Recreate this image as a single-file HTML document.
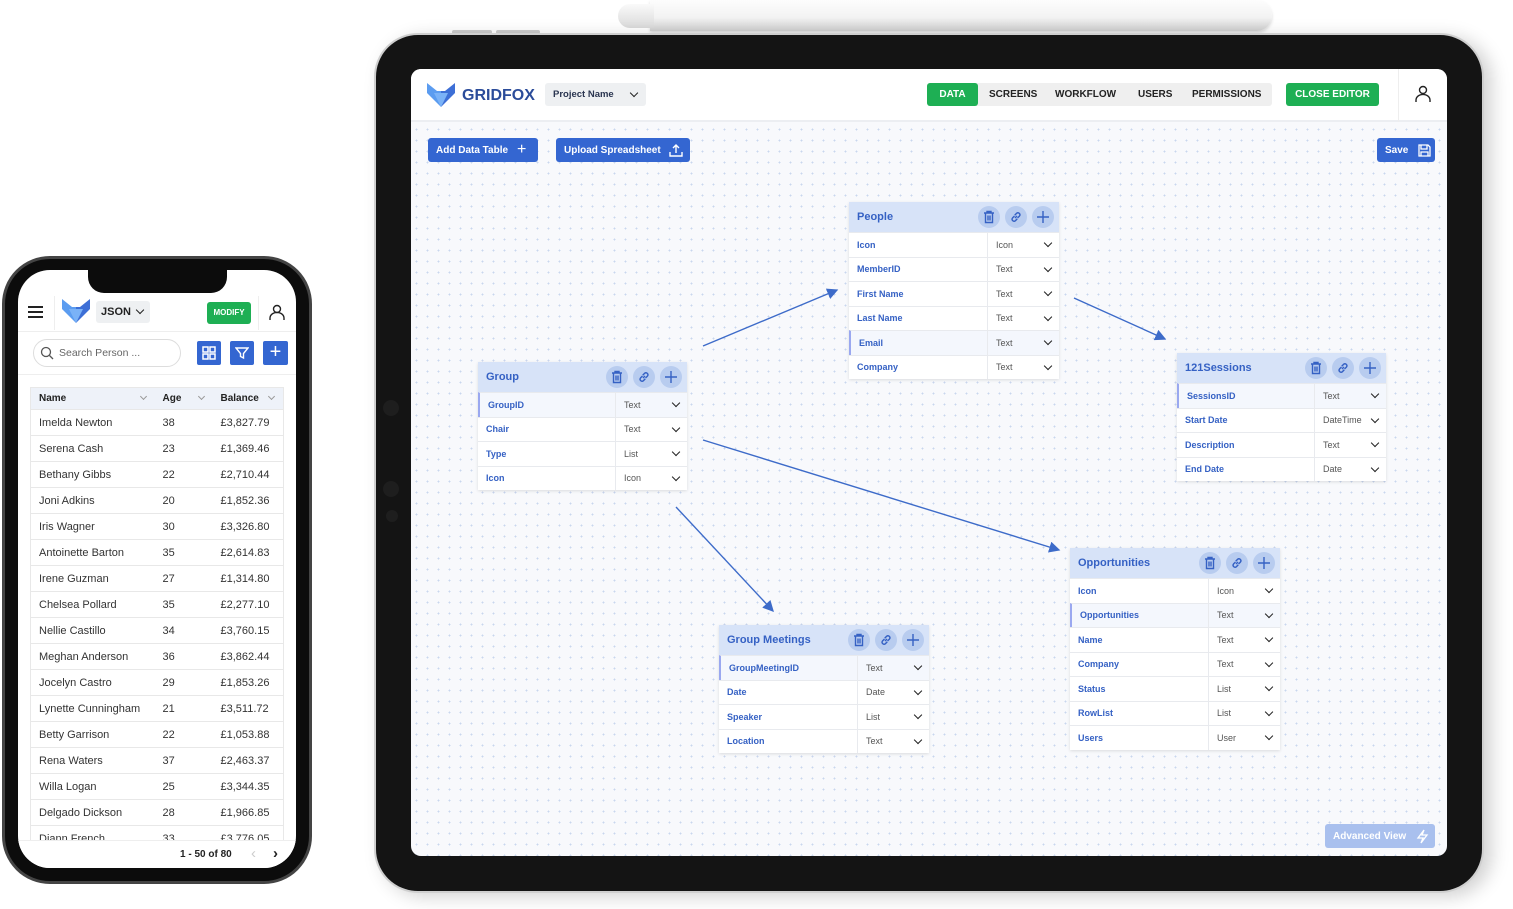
<!DOCTYPE html>
<html><head><meta charset="utf-8"><style>
*{box-sizing:border-box;margin:0;padding:0}
body{width:1513px;height:909px;background:#fff;position:relative;overflow:hidden;font-family:"Liberation Sans",sans-serif}
.abs{position:absolute}
.tab{position:absolute;background:#fff;box-shadow:0 1px 3px rgba(0,0,0,.12);font-size:9px}
.tab .h{height:30px;background:#d7e3f8;display:flex;align-items:center;padding-left:8px;color:#3561c4;font-weight:bold;font-size:11px;position:relative}
.tab .ic{position:absolute;top:4px;width:22px;height:22px;border-radius:50%;background:#b8ccef;display:flex;align-items:center;justify-content:center}
.tab .ic svg{width:14px;height:14px;fill:none;stroke:#3561c4;stroke-width:1.4}
.tab .r{height:24.5px;display:flex;align-items:center;border-top:1px solid #e8eaee;position:relative}
.tab .r .n{padding-left:8px;color:#3561c4;font-weight:bold}
.tab .r .t{position:absolute;top:0;bottom:0;border-left:1px solid #e8eaee;padding-left:8px;display:flex;align-items:center;color:#555}
.tab .r .c{position:absolute;right:8px;top:7px;width:6px;height:6px;border-right:1.6px solid #222;border-bottom:1.6px solid #222;transform:rotate(45deg)}
.tab .r.sel{background:#f4f7fd;border-left:2px solid #9aa8f0}
.btn{position:absolute;background:#3466d1;color:#fff;font-weight:bold;font-size:10px;border-radius:3px;display:flex;align-items:center;padding-left:8px}
.ph td{height:26px;border-top:1px solid #e8e8e8;font-size:11px;color:#333;padding:0}
.ph tr.hd td{height:22px;font-weight:bold;font-size:10px;color:#222}
.sc{display:inline-block;width:5px;height:5px;border-right:1px solid #999;border-bottom:1px solid #999;transform:rotate(45deg);margin-left:4px;position:relative;top:-2px}
</style></head><body>

<div class="abs" style="left:650px;top:0;width:622px;height:31px;background:linear-gradient(#fdfdfd,#f3f3f3 55%,#d0d0d0);border-radius:0 16px 16px 0;box-shadow:0 2px 3px rgba(0,0,0,.15)"></div>
<div class="abs" style="left:618px;top:4px;width:36px;height:24px;background:linear-gradient(#fafafa,#dadada);border-radius:20px 0 0 20px"></div>
<div class="abs" style="left:452px;top:30px;width:40px;height:4px;background:#ccc;border-radius:2px"></div>
<div class="abs" style="left:496px;top:30px;width:44px;height:4px;background:#ccc;border-radius:2px"></div>

<div class="abs" style="left:374px;top:33px;width:1110px;height:860px;border-radius:44px;background:#141414;border:2px solid #cfcfcf;box-shadow:8px 4px 18px rgba(0,0,0,.18)"></div>
<div class="abs" style="left:383px;top:400px;width:16px;height:16px;border-radius:50%;background:#1e1e1e"></div>
<div class="abs" style="left:383px;top:481px;width:16px;height:16px;border-radius:50%;background:#1e1e1e"></div>
<div class="abs" style="left:386px;top:510px;width:12px;height:12px;border-radius:50%;background:#1e1e1e"></div>

<div class="abs" style="left:411px;top:69px;width:1036px;height:787px;border-radius:10px;overflow:hidden;background:#f8f9fc;background-image:radial-gradient(#c9d6ee 0.8px,transparent 1px);background-size:11px 11px">
  <div class="abs" style="left:0;top:0;width:1036px;height:53px;background:#fff;border-bottom:2px solid #eceef2"></div>
  <svg class="abs" style="left:16px;top:14px" width="28" height="24" viewBox="0 0 28 24"><polygon points="0,0 10,8 14,8 14,24 0,10" fill="#5b9cf0"/><polygon points="28,0 18,8 14,8 14,24 28,10" fill="#3d6fd6"/><polygon points="7,10 14,24 21,10" fill="#7ab2f7"/></svg>
  <div class="abs" style="left:51px;top:18px;font-size:16px;font-weight:bold;color:#2b4c9a">GRIDFOX</div>
  <div class="abs" style="left:134px;top:14px;width:101px;height:23px;background:#eef0f2;border-radius:3px;font-size:9.5px;font-weight:bold;color:#2a3550;padding:6px 0 0 8px">Project Name</div>
  <div class="abs" style="left:220px;top:21px;width:6px;height:6px;border-right:1.6px solid #222;border-bottom:1.6px solid #222;transform:rotate(45deg)"></div>
  <div class="abs" style="left:516px;top:14px;width:345px;height:23px;background:#efefef;border-radius:3px"></div>
  <div class="abs" style="left:516px;top:14px;width:51px;height:23px;background:#1eaf54;border-radius:3px;color:#fff;font-weight:bold;font-size:10px;text-align:center;line-height:23px">DATA</div>
  <div class="abs" style="left:578px;top:14px;font-size:10px;font-weight:bold;color:#222;line-height:23px">SCREENS</div>
  <div class="abs" style="left:644px;top:14px;font-size:10px;font-weight:bold;color:#222;line-height:23px">WORKFLOW</div>
  <div class="abs" style="left:727px;top:14px;font-size:10px;font-weight:bold;color:#222;line-height:23px">USERS</div>
  <div class="abs" style="left:781px;top:14px;font-size:10px;font-weight:bold;color:#222;line-height:23px">PERMISSIONS</div>
  <div class="abs" style="left:875px;top:14px;width:93px;height:23px;background:#1eaf54;border-radius:3px;color:#fff;font-weight:bold;font-size:10px;text-align:center;line-height:23px">CLOSE EDITOR</div>
  <div class="abs" style="left:987px;top:0;width:1px;height:53px;background:#eee"></div>
  <svg class="abs" style="left:1003px;top:16px" width="18" height="18" viewBox="0 0 18 18" fill="none" stroke="#222" stroke-width="1.4"><circle cx="9" cy="5" r="3.5"/><path d="M2 17v-2a5 4 0 0 1 14 0v2"/></svg>
  <div class="btn" style="left:17px;top:69px;width:110px;height:24px">Add Data Table<span style="margin-left:9px;font-size:16px;font-weight:normal">+</span></div>
  <div class="btn" style="left:145px;top:69px;width:134px;height:24px">Upload Spreadsheet<svg style="margin-left:8px" width="14" height="14" viewBox="0 0 14 14" fill="none" stroke="#fff" stroke-width="1.4"><path d="M7 10V2M4 5l3-3 3 3M1 9v4h12V9"/></svg></div>
  <div class="btn" style="left:966px;top:69px;width:58px;height:24px">Save<svg style="margin-left:10px" width="13" height="13" viewBox="0 0 13 13" fill="none" stroke="#fff" stroke-width="1.3"><path d="M1 1h9l2 2v9H1z"/><path d="M3 1v4h6V1M3 12V8h7v4"/></svg></div>
  <div class="btn" style="left:914px;top:755px;width:110px;height:24px;background:#a9c0ee">Advanced View<svg style="margin-left:10px" width="13" height="15" viewBox="0 0 13 15" fill="none" stroke="#fff" stroke-width="1.3"><path d="M8 1L2 9h5l-2 5 6-8H6z"/></svg></div>
</div>

<svg class="abs" style="left:0;top:0" width="1513" height="909">
<defs><marker id="a" markerWidth="8" markerHeight="8" refX="7" refY="4" orient="auto"><path d="M0,0 L8,4 L0,8z" fill="#3d6bc9"/></marker>
<symbol id="tr" viewBox="0 0 14 14"><path d="M2 3h10M5 3V1.5h4V3M3.5 3v9.5h7V3M6 5.5v5M8 5.5v5"/></symbol>
<symbol id="lk" viewBox="0 0 14 14"><path d="M6 8l2-2M5.5 6L3.5 8a2 2 0 0 0 2.8 2.8l2-2M8.5 8l2-2a2 2 0 0 0-2.8-2.8l-2 2"/></symbol>
<symbol id="pl" viewBox="0 0 14 14"><path d="M7 1v12M1 7h12"/></symbol>
</defs>
<g stroke="#3d6bc9" stroke-width="1.4" marker-end="url(#a)">
<line x1="703" y1="346" x2="837" y2="290"/>
<line x1="1074" y1="298" x2="1165" y2="339"/>
<line x1="703" y1="440" x2="1059" y2="550"/>
<line x1="676" y1="507" x2="773" y2="611"/>
</g></svg>

<div class="tab" style="left:849px;top:202px;width:210px">
 <div class="h">People<div class="ic" style="left:129px"><svg><use href="#tr"/></svg></div><div class="ic" style="left:156px"><svg><use href="#lk"/></svg></div><div class="ic" style="left:183px"><svg><use href="#pl"/></svg></div></div>
 <div class="r"><span class="n">Icon</span><span class="t" style="left:138px;right:0">Icon</span><i class="c"></i></div>
 <div class="r"><span class="n">MemberID</span><span class="t" style="left:138px;right:0">Text</span><i class="c"></i></div>
 <div class="r"><span class="n">First Name</span><span class="t" style="left:138px;right:0">Text</span><i class="c"></i></div>
 <div class="r"><span class="n">Last Name</span><span class="t" style="left:138px;right:0">Text</span><i class="c"></i></div>
 <div class="r sel"><span class="n">Email</span><span class="t" style="left:136px;right:0">Text</span><i class="c"></i></div>
 <div class="r"><span class="n">Company</span><span class="t" style="left:138px;right:0">Text</span><i class="c"></i></div>
</div>

<div class="tab" style="left:478px;top:362px;width:209px">
 <div class="h">Group<div class="ic" style="left:128px"><svg><use href="#tr"/></svg></div><div class="ic" style="left:155px"><svg><use href="#lk"/></svg></div><div class="ic" style="left:182px"><svg><use href="#pl"/></svg></div></div>
 <div class="r sel"><span class="n">GroupID</span><span class="t" style="left:135px;right:0">Text</span><i class="c"></i></div>
 <div class="r"><span class="n">Chair</span><span class="t" style="left:137px;right:0">Text</span><i class="c"></i></div>
 <div class="r"><span class="n">Type</span><span class="t" style="left:137px;right:0">List</span><i class="c"></i></div>
 <div class="r"><span class="n">Icon</span><span class="t" style="left:137px;right:0">Icon</span><i class="c"></i></div>
</div>

<div class="tab" style="left:1177px;top:353px;width:209px">
 <div class="h">121Sessions<div class="ic" style="left:128px"><svg><use href="#tr"/></svg></div><div class="ic" style="left:155px"><svg><use href="#lk"/></svg></div><div class="ic" style="left:182px"><svg><use href="#pl"/></svg></div></div>
 <div class="r sel"><span class="n">SessionsID</span><span class="t" style="left:135px;right:0">Text</span><i class="c"></i></div>
 <div class="r"><span class="n">Start Date</span><span class="t" style="left:137px;right:0">DateTime</span><i class="c"></i></div>
 <div class="r"><span class="n">Description</span><span class="t" style="left:137px;right:0">Text</span><i class="c"></i></div>
 <div class="r"><span class="n">End Date</span><span class="t" style="left:137px;right:0">Date</span><i class="c"></i></div>
</div>

<div class="tab" style="left:1070px;top:548px;width:210px">
 <div class="h">Opportunities<div class="ic" style="left:129px"><svg><use href="#tr"/></svg></div><div class="ic" style="left:156px"><svg><use href="#lk"/></svg></div><div class="ic" style="left:183px"><svg><use href="#pl"/></svg></div></div>
 <div class="r"><span class="n">Icon</span><span class="t" style="left:138px;right:0">Icon</span><i class="c"></i></div>
 <div class="r sel"><span class="n">Opportunities</span><span class="t" style="left:136px;right:0">Text</span><i class="c"></i></div>
 <div class="r"><span class="n">Name</span><span class="t" style="left:138px;right:0">Text</span><i class="c"></i></div>
 <div class="r"><span class="n">Company</span><span class="t" style="left:138px;right:0">Text</span><i class="c"></i></div>
 <div class="r"><span class="n">Status</span><span class="t" style="left:138px;right:0">List</span><i class="c"></i></div>
 <div class="r"><span class="n">RowList</span><span class="t" style="left:138px;right:0">List</span><i class="c"></i></div>
 <div class="r"><span class="n">Users</span><span class="t" style="left:138px;right:0">User</span><i class="c"></i></div>
</div>

<div class="tab" style="left:719px;top:625px;width:210px">
 <div class="h">Group Meetings<div class="ic" style="left:129px"><svg><use href="#tr"/></svg></div><div class="ic" style="left:156px"><svg><use href="#lk"/></svg></div><div class="ic" style="left:183px"><svg><use href="#pl"/></svg></div></div>
 <div class="r sel"><span class="n">GroupMeetingID</span><span class="t" style="left:136px;right:0">Text</span><i class="c"></i></div>
 <div class="r"><span class="n">Date</span><span class="t" style="left:138px;right:0">Date</span><i class="c"></i></div>
 <div class="r"><span class="n">Speaker</span><span class="t" style="left:138px;right:0">List</span><i class="c"></i></div>
 <div class="r"><span class="n">Location</span><span class="t" style="left:138px;right:0">Text</span><i class="c"></i></div>
</div>

<div class="abs" style="left:2px;top:256px;width:310px;height:628px;border-radius:48px;background:#0c0c0c;border:3px solid #444"></div>
<div class="abs" style="left:18px;top:270px;width:278px;height:598px;border-radius:32px;background:#fff;overflow:hidden">
  <div class="abs" style="left:70px;top:0;width:139px;height:23px;background:#0c0c0c;border-radius:0 0 16px 16px"></div>
  <div class="abs" style="left:10px;top:36px;width:15px;height:2px;background:#222;box-shadow:0 5px 0 #222,0 10px 0 #222"></div>
  <div class="abs" style="left:36px;top:26px;width:1px;height:34px;background:#eee"></div>
  <svg class="abs" style="left:44px;top:29px" width="28" height="24" viewBox="0 0 28 24"><polygon points="0,0 10,8 14,8 14,24 0,10" fill="#5b9cf0"/><polygon points="28,0 18,8 14,8 14,24 28,10" fill="#3d6fd6"/><polygon points="7,10 14,24 21,10" fill="#7ab2f7"/></svg>
  <div class="abs" style="left:78px;top:31px;width:54px;height:22px;background:#eef0f2;border-radius:3px;font-size:11px;font-weight:bold;color:#222;padding:5px 0 0 5px">JSON</div>
  <div class="abs" style="left:119px;top:37px;width:6px;height:6px;border-right:1.6px solid #222;border-bottom:1.6px solid #222;transform:rotate(45deg)"></div>
  <div class="abs" style="left:189px;top:32px;width:44px;height:22px;background:#1eaf54;border-radius:3px;color:#fff;font-size:8px;font-weight:bold;text-align:center;line-height:22px">MODIFY</div>
  <div class="abs" style="left:240px;top:26px;width:1px;height:34px;background:#eee"></div>
  <svg class="abs" style="left:251px;top:34px" width="16" height="17" viewBox="0 0 16 17" fill="none" stroke="#222" stroke-width="1.4"><circle cx="8" cy="5" r="3.5"/><path d="M1 16v-2a5 4 0 0 1 14 0v2"/></svg>
  <div class="abs" style="left:0;top:61px;width:278px;height:1px;background:#eee"></div>
  <div class="abs" style="left:15px;top:69px;width:148px;height:28px;border:1px solid #ddd;border-radius:14px;font-size:10.5px;color:#666;padding:7px 0 0 25px">Search Person ...</div>
  <svg class="abs" style="left:22px;top:76px" width="14" height="14" viewBox="0 0 14 14" fill="none" stroke="#555" stroke-width="1.3"><circle cx="6" cy="6" r="4.5"/><path d="M9.5 9.5l3.5 3.5"/></svg>
  <div class="abs" style="left:179px;top:71px;width:24px;height:24px;background:#3466d1;border-radius:2px"></div>
  <svg class="abs" style="left:184px;top:76px" width="14" height="14" viewBox="0 0 14 14" fill="none" stroke="#fff" stroke-width="1.5"><rect x="1" y="1" width="5" height="5"/><rect x="8" y="1" width="5" height="5"/><rect x="1" y="8" width="5" height="5"/><rect x="8" y="8" width="5" height="5"/></svg>
  <div class="abs" style="left:212px;top:71px;width:24px;height:24px;background:#3466d1;border-radius:2px"></div>
  <svg class="abs" style="left:217px;top:76px" width="14" height="14" viewBox="0 0 14 14" fill="none" stroke="#fff" stroke-width="1.4"><path d="M1 2h12L8.5 7.5V12l-3-1.5V7.5z"/></svg>
  <div class="abs" style="left:245px;top:71px;width:25px;height:24px;background:#3466d1;border-radius:2px;color:#fff;font-size:20px;text-align:center;line-height:23px">+</div>
  <div class="abs" style="left:0;top:104px;width:278px;height:1px;background:#eee"></div>
  <table class="abs ph" style="left:12px;top:117px;width:254px;border-collapse:collapse;border:1px solid #e8e8e8">
   <tr class="hd" style="background:#eef2f9"><td style="padding-left:8px;width:132px">Name<span class="sc" style="margin-left:75px"></span></td><td style="width:58px">Age<span class="sc" style="margin-left:18px"></span></td><td>Balance<span class="sc" style="margin-left:10px"></span></td></tr>
   <tr><td style="padding-left:8px">Imelda Newton</td><td>38</td><td>£3,827.79</td></tr>
   <tr><td style="padding-left:8px">Serena Cash</td><td>23</td><td>£1,369.46</td></tr>
   <tr><td style="padding-left:8px">Bethany Gibbs</td><td>22</td><td>£2,710.44</td></tr>
   <tr><td style="padding-left:8px">Joni Adkins</td><td>20</td><td>£1,852.36</td></tr>
   <tr><td style="padding-left:8px">Iris Wagner</td><td>30</td><td>£3,326.80</td></tr>
   <tr><td style="padding-left:8px">Antoinette Barton</td><td>35</td><td>£2,614.83</td></tr>
   <tr><td style="padding-left:8px">Irene Guzman</td><td>27</td><td>£1,314.80</td></tr>
   <tr><td style="padding-left:8px">Chelsea Pollard</td><td>35</td><td>£2,277.10</td></tr>
   <tr><td style="padding-left:8px">Nellie Castillo</td><td>34</td><td>£3,760.15</td></tr>
   <tr><td style="padding-left:8px">Meghan Anderson</td><td>36</td><td>£3,862.44</td></tr>
   <tr><td style="padding-left:8px">Jocelyn Castro</td><td>29</td><td>£1,853.26</td></tr>
   <tr><td style="padding-left:8px">Lynette Cunningham</td><td>21</td><td>£3,511.72</td></tr>
   <tr><td style="padding-left:8px">Betty Garrison</td><td>22</td><td>£1,053.88</td></tr>
   <tr><td style="padding-left:8px">Rena Waters</td><td>37</td><td>£2,463.37</td></tr>
   <tr><td style="padding-left:8px">Willa Logan</td><td>25</td><td>£3,344.35</td></tr>
   <tr><td style="padding-left:8px">Delgado Dickson</td><td>28</td><td>£1,966.85</td></tr>
   <tr><td style="padding-left:8px">Diann French</td><td>33</td><td>£3,776.05</td></tr>
  </table>
  <div class="abs" style="left:0;top:570px;width:278px;height:30px;background:#fff;border-top:1px solid #eee"></div>
  <div class="abs" style="left:162px;top:579px;font-size:10px;font-weight:bold;color:#222">1 - 50 of 80</div>
  <div class="abs" style="left:233px;top:575px;font-size:15px;color:#ccc">&lsaquo;</div>
  <div class="abs" style="left:255px;top:575px;font-size:15px;color:#222;font-weight:bold">&rsaquo;</div>
</div>
</body></html>
